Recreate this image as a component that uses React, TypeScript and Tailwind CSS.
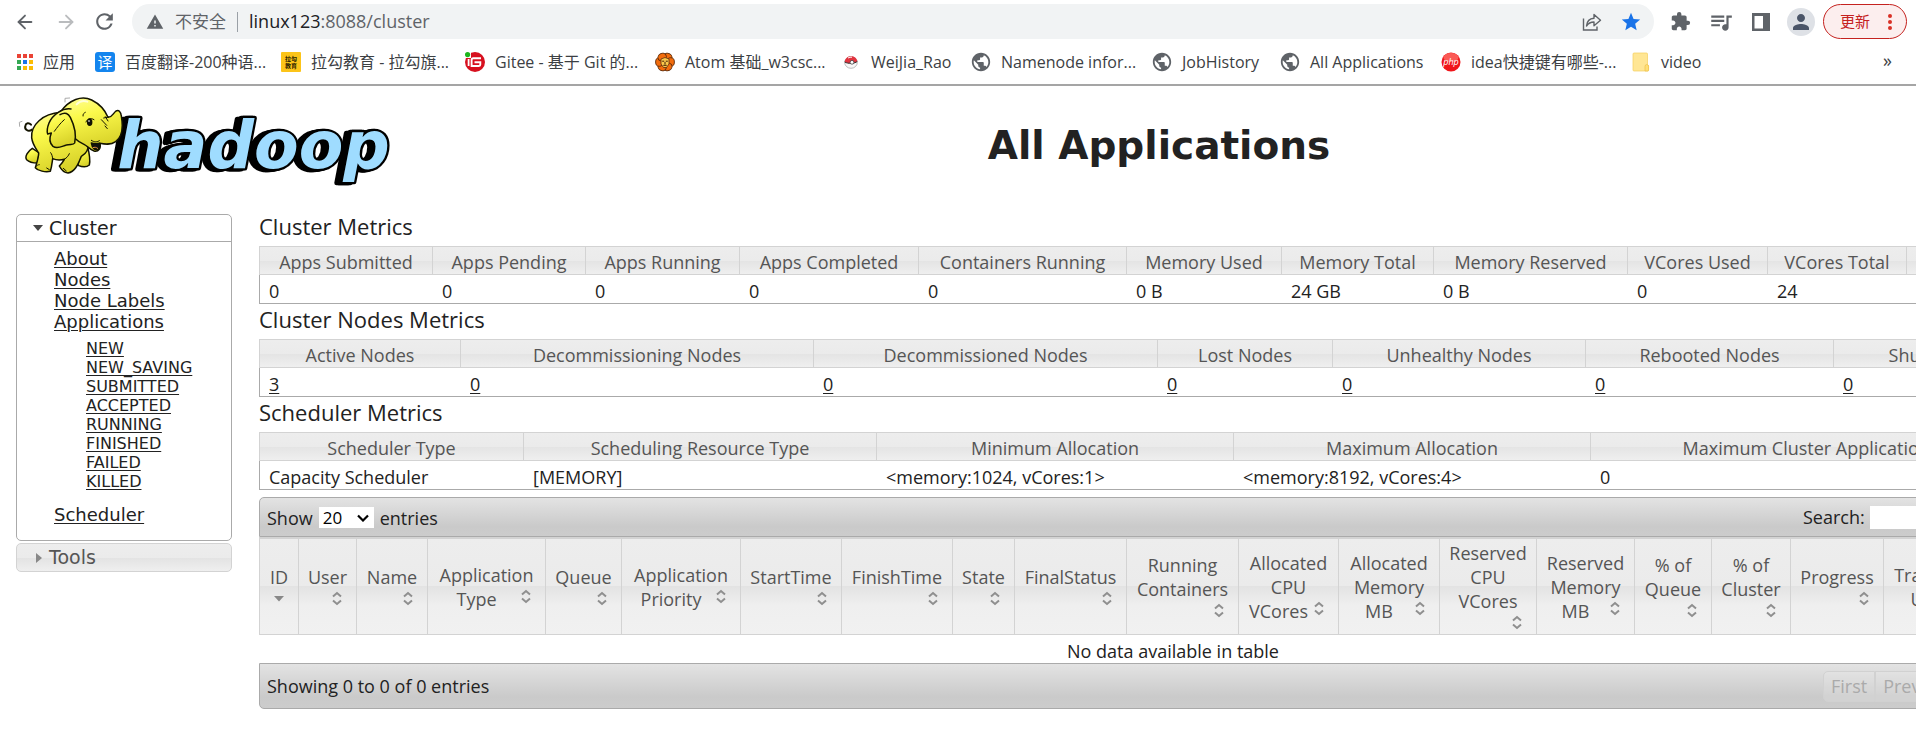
import React from "react";
import { ArrowLeft, ArrowRight } from "lucide-react";
import {
  MdExtension,
  MdOutlineQueueMusic,
  MdPerson,
  MdPublic,
  MdRefresh,
  MdStar,
  MdWarning,
} from "react-icons/md";

type Metric = { label: string; value: string; width: string; link?: boolean };

const clusterMetrics: Metric[] = [
  { label: "Apps Submitted", value: "0", width: "w-[173px]" },
  { label: "Apps Pending", value: "0", width: "w-[153px]" },
  { label: "Apps Running", value: "0", width: "w-[154px]" },
  { label: "Apps Completed", value: "0", width: "w-[179px]" },
  { label: "Containers Running", value: "0", width: "w-[208px]" },
  { label: "Memory Used", value: "0 B", width: "w-[155px]" },
  { label: "Memory Total", value: "24 GB", width: "w-[152px]" },
  { label: "Memory Reserved", value: "0 B", width: "w-[194px]" },
  { label: "VCores Used", value: "0", width: "w-[140px]" },
  { label: "VCores Total", value: "24", width: "w-[139px]" },
  { label: "VCores Reserved", value: "0", width: "w-[181px]" },
];

const nodeMetrics: Metric[] = [
  { label: "Active Nodes", value: "3", width: "w-[201px]", link: true },
  { label: "Decommissioning Nodes", value: "0", width: "w-[353px]", link: true },
  { label: "Decommissioned Nodes", value: "0", width: "w-[344px]", link: true },
  { label: "Lost Nodes", value: "0", width: "w-[175px]", link: true },
  { label: "Unhealthy Nodes", value: "0", width: "w-[253px]", link: true },
  { label: "Rebooted Nodes", value: "0", width: "w-[248px]", link: true },
  { label: "Shutdown Nodes", value: "0", width: "w-[254px]", link: true },
];

const schedulerMetrics: Metric[] = [
  { label: "Scheduler Type", value: "Capacity Scheduler", width: "w-[264px]" },
  { label: "Scheduling Resource Type", value: "[MEMORY]", width: "w-[353px]" },
  { label: "Minimum Allocation", value: "<memory:1024, vCores:1>", width: "w-[357px]" },
  { label: "Maximum Allocation", value: "<memory:8192, vCores:4>", width: "w-[357px]" },
  { label: "Maximum Cluster Application Priority", value: "0", width: "w-[497px]" },
];

type Column = { lines: string[]; width: string; inline?: boolean; sorted?: boolean };

const columns: Column[] = [
  { lines: ["ID"], width: "w-[39px]", sorted: true },
  { lines: ["User"], width: "w-[58px]" },
  { lines: ["Name"], width: "w-[71px]" },
  { lines: ["Application", "Type"], width: "w-[118px]", inline: true },
  { lines: ["Queue"], width: "w-[76px]" },
  { lines: ["Application", "Priority"], width: "w-[119px]", inline: true },
  { lines: ["StartTime"], width: "w-[101px]" },
  { lines: ["FinishTime"], width: "w-[111px]" },
  { lines: ["State"], width: "w-[62px]" },
  { lines: ["FinalStatus"], width: "w-[112px]" },
  { lines: ["Running", "Containers"], width: "w-[112px]" },
  { lines: ["Allocated", "CPU", "VCores"], width: "w-[100px]", inline: true },
  { lines: ["Allocated", "Memory", "MB"], width: "w-[101px]", inline: true },
  { lines: ["Reserved", "CPU", "VCores"], width: "w-[97px]" },
  { lines: ["Reserved", "Memory", "MB"], width: "w-[98px]", inline: true },
  { lines: ["% of", "Queue"], width: "w-[77px]" },
  { lines: ["% of", "Cluster"], width: "w-[79px]" },
  { lines: ["Progress"], width: "w-[93px]" },
  { lines: ["Tracking", "UI"], width: "w-[92px]", inline: true },
  { lines: ["Blacklisted", "Nodes"], width: "w-[112px]", inline: true },
];

const states = ["NEW", "NEW_SAVING", "SUBMITTED", "ACCEPTED", "RUNNING", "FINISHED", "FAILED", "KILLED"];

function AppsIcon() {
  const colors = ["#ea4335", "#ea4335", "#ea4335", "#34a853", "#1a73e8", "#fbbc04", "#34a853", "#fbbc04", "#fbbc04"];
  return (
    <svg viewBox="0 0 16 16" className="size-4">
      {colors.map((c, i) => (
        <rect key={i} x={(i % 3) * 6} y={Math.floor(i / 3) * 6} width="4" height="4" fill={c} />
      ))}
    </svg>
  );
}

function TranslateIcon() {
  return (
    <span className="flex size-5 items-center justify-center rounded-[3px] bg-[#1485ee] text-[15px] leading-none text-white">
      译
    </span>
  );
}

function LagouIcon() {
  return (
    <svg viewBox="0 0 20 20" className="size-5">
      <rect width="20" height="20" rx="1" fill="#fcc419" />
      <g fontSize="6" fontWeight="700" fill="#2b2200" textAnchor="middle">
        <text x="10" y="9">拉勾</text>
        <text x="10" y="16">教育</text>
      </g>
    </svg>
  );
}

function GiteeIcon() {
  return (
    <svg viewBox="0 0 20 20" className="size-5">
      <circle cx="10" cy="10" r="10" fill="#d7101f" />
      <rect width="6" height="6" fill="#fff" />
      <circle cx="2.6" cy="2.6" r="2.6" fill="#1cb51c" />
      <path d="M16 6.3H8.2Q6.6 6.3 6.6 8V14h7.3q1.4 0 1.4-1.4V10.300H9.500" fill="none" stroke="#fff" strokeWidth="1.900" />
      <path d="M3.600 7v7" stroke="#fff" strokeWidth="1.800" />
    </svg>
  );
}

function LionIcon() {
  const angles = [0, 60, 120, 180, 240, 300];
  return (
    <svg viewBox="0 0 20 20" className="size-5">
      {angles.map((a) => (
        <ellipse key={a} cx="10" cy="4.300" rx="4.300" ry="3.700" fill="#f36c0c" stroke="#5a2b0c" strokeWidth="0.900" transform={`rotate(${a + 30} 10 10)`} />
      ))}
      <path d="M6 7q4-3 8 0v5l-2.500 3.500h-3L6 12z" fill="#fbc94c" stroke="#5a2b0c" strokeWidth="0.800" />
      <path d="M7.200 9.200h2M10.800 9.200h2M10 10v2.500M8.300 13.300h3.400" stroke="#3d1d06" strokeWidth="1" />
    </svg>
  );
}

function PokeballIcon() {
  return (
    <svg viewBox="0 0 20 20" className="size-5">
      <ellipse cx="10" cy="10.500" rx="6.300" ry="5.800" fill="#f7f7f7" stroke="#a9a9a9" strokeWidth="0.800" />
      <path d="M3.700 10C4 6 7 4.200 10 4.200s6 1.800 6.300 5.300c-3 2.300-9.300 2.500-12.600.5z" fill="#e2343f" />
      <path d="M3.700 10c3.300 2 9.600 1.800 12.600-.5" stroke="#333" strokeWidth="1" fill="none" />
      <circle cx="11" cy="10.300" r="1.900" fill="#fff" stroke="#444" strokeWidth="0.800" />
      <path d="M7 6q2-1.200 4-.8" stroke="#fff" strokeWidth="1" fill="none" />
    </svg>
  );
}

function PhpIcon() {
  return (
    <svg viewBox="0 0 20 20" className="size-5">
      <circle cx="10" cy="10" r="9.500" fill="#f0151a" />
      <ellipse cx="10" cy="5.500" rx="7.500" ry="4.500" fill="#fa5a55" />
      <text x="10" y="12.500" fontSize="9" textAnchor="middle" fill="#fff" fontStyle="italic">php</text>
    </svg>
  );
}

function FolderIcon() {
  return (
    <svg viewBox="0 0 20 20" className="size-5">
      <path d="M3 1h12.500q1 0 1 1v10.500l1 1V18q0 1-1 1H3q-1 0-1-1V2q0-1 1-1z" fill="#ffe694" stroke="#f5cf5c" strokeWidth="0.700" />
      <path d="M14 19v-4.500q0-2 1.800-2t1.800 2V18q0 1-1 1z" fill="#ffdf77" stroke="#eec04a" strokeWidth="0.700" />
    </svg>
  );
}

function GlobeIcon() {
  return <MdPublic className="size-[22px] -mx-px text-[#5f6368]" />;
}

const bookmarks = [
  { icon: <AppsIcon />, label: "应用", width: "w-[78px]" },
  { icon: <TranslateIcon />, label: "百度翻译-200种语...", width: "w-[186px]" },
  { icon: <LagouIcon />, label: "拉勾教育 - 拉勾旗...", width: "w-[184px]" },
  { icon: <GiteeIcon />, label: "Gitee - 基于 Git 的...", width: "w-[190px]" },
  { icon: <LionIcon />, label: "Atom 基础_w3csc...", width: "w-[186px]" },
  { icon: <PokeballIcon />, label: "WeiJia_Rao", width: "w-[130px]" },
  { icon: <GlobeIcon />, label: "Namenode infor...", width: "w-[181px]" },
  { icon: <GlobeIcon />, label: "JobHistory", width: "w-[128px]" },
  { icon: <GlobeIcon />, label: "All Applications", width: "w-[161px]" },
  { icon: <PhpIcon />, label: "idea快捷键有哪些-...", width: "w-[190px]" },
  { icon: <FolderIcon />, label: "video", width: "w-[90px]" },
];

function BrowserBar() {
  return (
    <header className="border-b-2 border-[#a5a5a5] bg-white text-[#3c4043]">
      <div className="flex h-[42px] items-center pt-px pr-[9px] pl-[14px]">
        <div className="flex items-center gap-[19px] text-[#5f6368]">
          <button aria-label="Back"><ArrowLeft className="size-[22px]" strokeWidth={2} /></button>
          <button aria-label="Forward" className="text-[#babcbe]"><ArrowRight className="size-[22px]" strokeWidth={2} /></button>
          <button aria-label="Reload" className="-ml-1"><MdRefresh className="size-[25px]" /></button>
        </div>
        <div className="ml-[15px] flex h-[35px] flex-1 items-center rounded-full bg-[#f1f3f4] pr-[12px] pl-[14px] text-[18px]">
          <MdWarning className="size-[18px] text-[#5f6368]" />
          <span className="ml-[11px] text-[17px] text-[#5f6368]">不安全</span>
          <span className="mx-[11px] h-5 w-px bg-[#9aa0a6]" />
          <span className="flex-1 text-[#5f6368]">
            <span className="text-[#202124]">linux123</span>:8088/cluster
          </span>
          <button aria-label="Share" className="mr-[18px]">
            <svg viewBox="0 0 20 20" className="size-5 text-[#5f6368]" fill="none" stroke="currentColor" strokeWidth="1.400">
              <path d="M1.500 6.500V18H15v-3.500" />
              <path d="M4.500 14C5 9 8 6.500 12 6.300V2.500l6.500 5.800-6.500 5.500V10c-3.500 0-5.500 1-7.500 4z" strokeLinejoin="round" />
            </svg>
          </button>
          <button aria-label="Bookmark this page"><MdStar className="size-[22px] text-[#1a73e8]" /></button>
        </div>
        <div className="ml-4 flex items-center text-[#5f6368]">
          <button aria-label="Extensions"><MdExtension className="size-[21px]" /></button>
          <button aria-label="Media" className="ml-[17px]"><MdOutlineQueueMusic className="size-[26px]" /></button>
          <button aria-label="Side panel" className="ml-[18px]">
            <svg viewBox="0 0 18 18" className="size-[18px]">
              <path fillRule="evenodd" d="M0 0h18v18H0zM2.500 3v12.500H11V3z" fill="currentColor" />
            </svg>
          </button>
          <button aria-label="Profile" className="ml-[17px] flex size-7 items-center justify-center rounded-full bg-[#dee1e6]">
            <MdPerson className="size-6 text-[#4a5568]" />
          </button>
          <button className="ml-2 flex h-[35px] w-[84px] items-center rounded-full border border-[#c5221f] bg-[#fceeee] pl-4 text-[15px] text-[#c5221f]">
            更新
            <svg viewBox="0 0 4 18" className="ml-[18px] h-[18px] w-1" fill="#d93025">
              <circle cx="2" cy="3" r="2" />
              <circle cx="2" cy="9" r="2" />
              <circle cx="2" cy="15" r="2" />
            </svg>
          </button>
        </div>
      </div>
      <nav className="flex h-[42px] items-center pb-[2px] pl-[17px] text-[16px]">
        {bookmarks.map((b) => (
          <a key={b.label} href="#" className={`${b.width} flex shrink-0 items-center gap-[10px] whitespace-nowrap`}>
            <span className="shrink-0">{b.icon}</span>
            {b.label}
          </a>
        ))}
        <button className="mr-6 ml-auto pb-1 text-[18px]">»</button>
      </nav>
    </header>
  );
}

function HadoopLogo() {
  return (
    <svg viewBox="51 33 1122 270" className="h-[90px] w-[374px]" role="img" aria-label="hadoop">
      <defs>
        <linearGradient id="skin" x1="0" y1="0" x2="0.3" y2="1">
          <stop offset="0" stopColor="#fffe9a" />
          <stop offset="0.400" stopColor="#fbf94b" />
          <stop offset="1" stopColor="#d9d32a" />
        </linearGradient>
        <filter id="extrude" x="-10%" y="-20%" width="120%" height="140%">
          <feOffset in="SourceAlpha" dx="-6" dy="1" result="a" />
          <feOffset in="SourceAlpha" dx="-12" dy="2" result="b" />
          <feOffset in="SourceAlpha" dx="-18" dy="2" result="c" />
          <feMerge>
            <feMergeNode in="c" />
            <feMergeNode in="b" />
            <feMergeNode in="a" />
            <feMergeNode in="SourceGraphic" />
          </feMerge>
        </filter>
      </defs>
      <text
        x="352"
        y="250"
        fontSize="195"
        fontWeight="700"
        fontStyle="italic"
        fill="#9fdcff"
        stroke="#000"
        strokeWidth="14"
        strokeLinejoin="round"
        paintOrder="stroke"
        filter="url(#extrude)"
        className="font-['DejaVu_Sans',sans-serif]"
      >
        hadoop
      </text>
      <g fill="url(#skin)" stroke="#141400" strokeWidth="4.500" strokeLinejoin="round" strokeLinecap="round">
        <path d="M96 134C84 142 73 133 76 122 78 113 87 112 93 119" fill="none" strokeWidth="6" />
        <path d="M97 190C84 198 73 215 80 224c8 8 22 10 32 10l6-30z" />
        <path d="M262 182C268 205 272 225 268 240c-8 7-22 6-34 1l6-40z" />
        <path d="M182 82C128 86 92 120 95 158c2 20 13 33 21 46 0 14-6 30-10 44 8 10 30 14 45 11 4-12 5-24 7-38 11 5 24 5 35 2-4 8-8 13-15 20 5 10 15 20 26 21 20-3 30-24 40-50 15-8 22-22 20-38z" />
        <path d="M158 221c-1-7-2-13-6-18M193 223c8-5 12-10 15-17M106 246c5-5 8-7 12-7M140 249l8 5M190 250l9 8" fill="none" strokeWidth="3" />
        <path d="M182 80C208 44 245 30 275 45c26 13 41 32 49 52 12 1 15-12 24-19 8-4 14 1 16 15 6 34 2 63-17 77-15 11-32 8-48 5 5 14-3 26-17 23-12-3-19-15-30-20-20-9-36-24-40-42z" />
        <path d="M274 174c2 14 11 25 22 17 6-7 5-12 3-16-10 2-18 1-25-1z" fill="#111" />
        <path d="M279 188c5-2 9-2 14 2" stroke="#e94" strokeWidth="3" fill="none" />
        <path d="M213 72C188 68 158 89 147 114c-5 13-7 25-4 33l11-3c-7 17-4 32 5 40 13 9 26 0 40-4 12-4 21 1 25-6 6-27-3-57-13-77-6-11-15-17-31-8" />
        <path d="M163 139c9-12 17-24 30-35" fill="none" strokeWidth="3" />
        <path d="M249 93c-1-6 3-9 7-11M274 166c9 6 18 6 24 1M304 104l16 17M316 95l8 13M311 99l15-3M315 123l7 8M258 111c4-10 13-14 24-7" fill="none" strokeWidth="3" />
        <ellipse cx="269" cy="112" rx="6" ry="9" fill="#111" />
        <ellipse cx="267" cy="108" rx="2" ry="3" fill="#fff" stroke="none" />
        <path d="M230 58c8-9 20-12 32-8" stroke="#fff" strokeWidth="6" fill="none" opacity="0.700" />
        <path d="M195 51v-11l14-1M59 124l-1-12 8-3" stroke="#aaa" strokeWidth="3" fill="none" />
      </g>
    </svg>
  );
}

function Sidebar() {
  return (
    <aside className="mt-[10px] w-[216px] shrink-0 font-['DejaVu_Sans',sans-serif] text-[18px] leading-[21px] text-[#222]">
      <section className="rounded-[5px] border border-[#aaa] bg-white">
        <h3 className="flex h-[27px] items-center gap-[6px] border-b border-[#aaa] pl-4 text-[19px]">
          <svg viewBox="0 0 10 6" className="h-[6px] w-[10px]"><path d="M0 0h10L5 6z" fill="#454545" /></svg>
          <a href="#">Cluster</a>
        </h3>
        <ul className="pt-[6px] pb-[15px] pl-[37px] underline decoration-1 underline-offset-2">
          <li><a href="#">About</a></li>
          <li><a href="#">Nodes</a></li>
          <li><a href="#">Node Labels</a></li>
          <li>
            <a href="#">Applications</a>
            <ul className="my-[7px] pb-[6px] pl-8 text-[16px] leading-[19px]">
              {states.map((s) => (
                <li key={s}><a href="#">{s}</a></li>
              ))}
            </ul>
          </li>
          <li><a href="#">Scheduler</a></li>
        </ul>
      </section>
      <h3 className="mt-[2px] flex h-[29px] items-center gap-[7px] rounded-[5px] border border-[#d3d3d3] bg-[linear-gradient(#ededed,#ebebeb_50%,#e3e3e3_52%,#efefef)] pl-[19px] text-[19px] text-[#555]">
        <svg viewBox="0 0 6 10" className="h-[10px] w-[6px]"><path d="M0 0v10l6-5z" fill="#888" /></svg>
        <a href="#">Tools</a>
      </h3>
    </aside>
  );
}

function MetricTable({ title, metrics }: { title: string; metrics: Metric[] }) {
  return (
    <section>
      <h2 className="h-[35px] text-[22px] leading-[30px] text-[#222]">{title}</h2>
      <table className="w-full table-fixed border-separate border-spacing-0 border-r border-b border-[#aaa]">
        <thead>
          <tr>
            {metrics.map((m) => (
              <th
                key={m.label}
                className={`${m.width} h-[29px] border-y border-l border-[#d3d3d3] bg-[linear-gradient(#ededed,#ebebeb_50%,#e4e4e4_52%,#efefef)] p-0 pt-[3px] font-normal whitespace-nowrap text-[#555]`}
              >
                {m.label}
              </th>
            ))}
          </tr>
        </thead>
        <tbody>
          <tr>
            {metrics.map((m) => (
              <td key={m.label} className="h-[28px] p-0 pt-[3px] pl-[10px] whitespace-nowrap first:border-l first:border-[#aaa] first:pl-[9px]">
                {m.link ? <a href="#" className="underline decoration-1 underline-offset-2">{m.value}</a> : m.value}
              </td>
            ))}
          </tr>
        </tbody>
      </table>
    </section>
  );
}

function SortIcon({ sorted }: { sorted?: boolean }) {
  return (
    <svg viewBox="0 0 20 20" className="size-5 shrink-0" fill="none" stroke="#8f8f8f" strokeWidth="2">
      {sorted ? (
        <path d="M5 7h10l-5 5.500z" fill="#888" stroke="none" />
      ) : (
        <path d="M6 7.500l4-3.500 4 3.500M6 11.500l4 3.500 4-3.500" />
      )}
    </svg>
  );
}

function ColumnHeader({ column }: { column: Column }) {
  const { lines, inline, sorted } = column;
  const last = lines.length - 1;
  return (
    <button className="block w-full leading-6">
      {lines.map((line, i) =>
        inline && i === last ? (
          <span key={line} className="flex items-start">
            <span className="flex-1">{line}</span>
            <SortIcon />
          </span>
        ) : (
          <span key={line} className="flex justify-center whitespace-nowrap">{line}</span>
        )
      )}
      {!inline && (
        <span className="flex justify-end">
          <SortIcon sorted={sorted} />
        </span>
      )}
    </button>
  );
}

function ApplicationsTable() {
  return (
    <section className="mt-[7px]">
      <div className="flex h-10 items-center rounded-t-[5px] border border-[#aaa] bg-[linear-gradient(#e3e3e3,#cacaca_75%,#cccccc)] pl-[7px]">
        <label className="flex items-center gap-[6px] pt-px">
          Show
          <span className="relative flex items-center">
            <select className="h-[21px] w-[55px] appearance-none bg-white pl-1 text-[17px] leading-[21px] text-black" defaultValue="20">
              <option>20</option>
              <option>40</option>
              <option>60</option>
            </select>
            <svg viewBox="0 0 12 8" className="pointer-events-none absolute right-[5px] h-2 w-3" fill="none" stroke="#000" strokeWidth="2.200">
              <path d="M1 1.500l5 5 5-5" />
            </svg>
          </span>
          entries
        </label>
        <label className="ml-auto flex w-[283px] items-center gap-[5px] pr-[7px]">
          Search:
          <input type="text" className="h-[23px] min-w-0 flex-1 bg-white px-1" />
        </label>
      </div>
      <table className="w-full table-fixed border-separate border-spacing-0">
        <thead>
          <tr>
            {columns.map((c) => (
              <th
                key={c.lines.join(" ")}
                className={`${c.width} h-[98px] border-t-2 border-b border-l border-[#d3d3d3] bg-[linear-gradient(#ededed,#ebebeb_49%,#e3e3e3_50%,#efefef_70%,#f1f1f1)] px-[9px] py-0 align-middle font-normal text-[#555]`}
              >
                <ColumnHeader column={c} />
              </th>
            ))}
          </tr>
        </thead>
        <tbody>
          <tr>
            <td colSpan={columns.length} className="h-[28px] p-0 pt-[3px] text-center">No data available in table</td>
          </tr>
        </tbody>
      </table>
      <div className="flex h-[46px] items-center rounded-b-[5px] border border-[#aaa] bg-[linear-gradient(#e3e3e3,#cacaca_75%,#cccccc)] pl-[7px]">
        <span>Showing 0 to 0 of 0 entries</span>
        <div className="ml-auto flex w-[263px] text-[#aaa]">
          {["First", "Previous", "Next", "Last"].map((label) => (
            <button key={label} className="h-[31px] border border-[#d1d1d1] bg-white/15 px-[7px] first:rounded-l-[5px] last:rounded-r-[5px]">
              {label}
            </button>
          ))}
        </div>
      </div>
    </section>
  );
}

export default function App() {
  return (
    <div className="min-h-screen w-full overflow-hidden bg-white font-['Open_Sans','Noto_Sans_CJK_SC',sans-serif]">
      <BrowserBar />
      <div className="flex h-[118px] items-start pt-[10px] pl-[17px]">
        <HadoopLogo />
        <h1 className="flex-1 pt-6 pl-[11px] text-center font-['DejaVu_Sans',sans-serif] text-[39px] leading-[52px] font-bold text-[#222]">
          All Applications
        </h1>
      </div>
      <div className="flex gap-[27px] pl-4">
        <Sidebar />
        <main className="min-w-[1828px] flex-1 pt-[7px] text-[18px] leading-6 text-[#222]">
          <MetricTable title="Cluster Metrics" metrics={clusterMetrics} />
          <MetricTable title="Cluster Nodes Metrics" metrics={nodeMetrics} />
          <MetricTable title="Scheduler Metrics" metrics={schedulerMetrics} />
          <ApplicationsTable />
        </main>
      </div>
    </div>
  );
}
